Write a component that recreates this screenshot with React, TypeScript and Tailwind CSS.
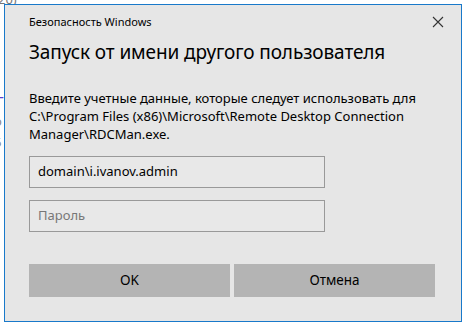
import React from "react";

export default function App() {
  return (
    <div
      className="relative w-[466px] h-[331px] bg-white overflow-hidden"
      style={{ fontFamily: '"Noto Sans", "Open Sans", sans-serif' }}
    >
      {/* fragments of the page behind the dialog */}
      <span className="absolute left-[-2px] top-[-10px] text-[13px] text-[#777]">20)</span>
      <span className="absolute left-[-4px] top-[90px] text-[15px] text-[#5b3fd0]">Г</span>
      <span className="absolute left-[-6px] top-[112px] text-[13px] text-[#888]">o</span>
      <span className="absolute left-[-6px] top-[133px] text-[13px] text-[#888]">6</span>

      <div className="relative ml-[4px] mt-[4px] w-[458px] h-[318px] border border-[#1979ca] bg-[#e6e6e6] text-black">
        <div className="flex items-center justify-between h-[33px] pl-[24px] pr-[16px]">
          <span className="text-[11px] pt-[1px]">Безопасность Windows</span>
          <svg width="12" height="12" viewBox="0 0 12 12" className="mr-[1px]">
            <path d="M1 1L11 11M11 1L1 11" stroke="#333" strokeWidth="1.1" />
          </svg>
        </div>
        <div className="pl-[24px]">
          <h1 className="text-[19px] leading-[28px] font-normal tracking-[-0.1px]">
            Запуск от имени другого пользователя
          </h1>
          <p className="mt-[23px] text-[13px] leading-[18px] pr-[30px]">
            Введите учетные данные, которые следует использовать для C:\Program Files (x86)\Microsoft\Remote Desktop Connection Manager\RDCMan.exe.
          </p>
          <div className="mt-[13px] w-[296px] h-[32px] border border-[#999] bg-[#e8e8e8] flex items-center pl-[8px] text-[13px]">
            domain\i.ivanov.admin
          </div>
          <div className="mt-[12px] w-[296px] h-[32px] border border-[#999] bg-[#e8e8e8] flex items-center pl-[8px] text-[13px] text-[#777]">
            Пароль
          </div>
          <div className="mt-[32px] flex gap-[4px]">
            <button className="w-[201px] h-[33px] bg-[#b4b4b4] text-[13.5px]">OK</button>
            <button className="w-[201px] h-[33px] bg-[#b4b4b4] text-[13.5px]">Отмена</button>
          </div>
        </div>
      </div>
    </div>
  );
}
